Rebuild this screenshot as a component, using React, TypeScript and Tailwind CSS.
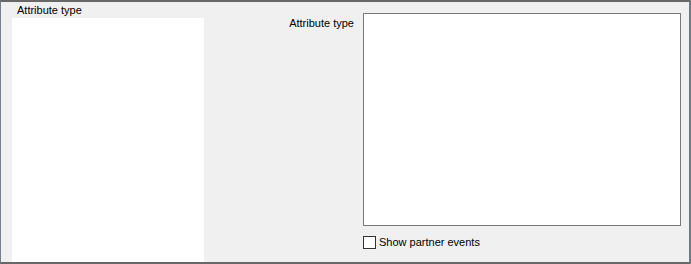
import React from "react";

export default function App() {
  const font = { fontFamily: '"Liberation Sans", Arial, sans-serif' };
  return (
    <div
      className="w-[691px] h-[264px] bg-[#f0f0f0] border-t-2 border-b-2 border-t-[#686868] border-b-[#686868] border-l border-l-[#76808e] border-r-2 border-r-[#6f7a89] flex text-[11px] text-black box-border"
      style={font}
    >
      <div className="flex flex-col w-[203px] pl-[11px] shrink-0">
        <div className="h-[16px] leading-[14px] pl-[5px] pt-[1px]">Attribute type</div>
        <div className="flex-1 w-[192px] bg-white" />
      </div>
      <div className="flex flex-col flex-1 pt-[11px]">
        <div className="flex">
          <div className="w-[150px] text-right pt-[3px] leading-[14px]">Attribute type</div>
          <div className="ml-[9px] w-[318px] h-[213px] bg-white border border-[#7a7a7a]" />
        </div>
        <div className="flex items-center ml-[159px] mt-[9px]">
          <div className="w-[13px] h-[13px] bg-white border border-[#333333]" />
          <span className="ml-[3px] leading-[14px]">Show partner events</span>
        </div>
      </div>
    </div>
  );
}
